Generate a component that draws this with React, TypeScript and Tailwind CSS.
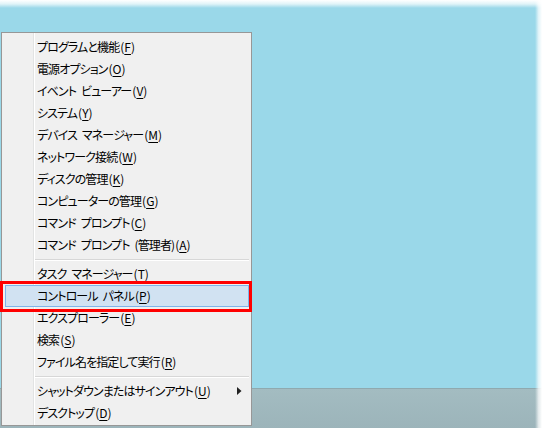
import React from "react";

type Item = { label: string; key: string; sub?: boolean; active?: boolean } | "sep";

const items: Item[] = [
  { label: "プログラムと機能", key: "F" },
  { label: "電源オプション", key: "O" },
  { label: "イベント ビューアー", key: "V" },
  { label: "システム", key: "Y" },
  { label: "デバイス マネージャー", key: "M" },
  { label: "ネットワーク接続", key: "W" },
  { label: "ディスクの管理", key: "K" },
  { label: "コンピューターの管理", key: "G" },
  { label: "コマンド プロンプト", key: "C" },
  { label: "コマンド プロンプト (管理者)", key: "A" },
  "sep",
  { label: "タスク マネージャー", key: "T" },
  { label: "コントロール パネル", key: "P", active: true },
  { label: "エクスプローラー", key: "E" },
  { label: "検索", key: "S" },
  { label: "ファイル名を指定して実行", key: "R" },
  "sep",
  { label: "シャットダウンまたはサインアウト", key: "U", sub: true },
  { label: "デスクトップ", key: "D" },
];

function Label({ text }: { text: string }) {
  const parts = text.split(" ");
  return (
    <span className="tracking-[-0.9px]">
      {parts.map((p, i) => (
        <React.Fragment key={i}>
          {i > 0 && <span className="inline-block w-[5px]"> </span>}
          {p}
        </React.Fragment>
      ))}
    </span>
  );
}

export default function App() {
  return (
    <div
      className="relative w-[542px] h-[428px] overflow-hidden bg-[#9ad8e9] flex flex-col"
      style={{ fontFamily: '"Noto Sans CJK JP", "Noto Sans", sans-serif' }}
    >
      <div className="flex-1" />
      <div className="h-[40px] border-t border-[#8fa9af] bg-gradient-to-b from-[#a3bcc1] to-[#9cb4ba]" />

      {/* soft edges */}
      <div className="absolute left-0 right-0 top-0 h-[8px] bg-gradient-to-b from-white via-white/70 to-transparent" />
      <div className="absolute top-0 bottom-0 right-0 w-[7px] bg-gradient-to-l from-white via-white/70 to-transparent" />

      {/* context menu */}
      <div className="absolute left-[1px] top-[32px] w-[251px] h-[394px] border border-[#979797] bg-[#f0f0f0] pt-[3px] pb-[1px] pl-[2px] pr-[1px]">
        <div className="relative flex flex-col">
          <div className="absolute left-[29px] top-[-3px] bottom-[-1px] w-[2px] border-l border-[#e2e3e3] bg-white" />
          {items.map((it, i) =>
            it === "sep" ? (
              <div key={i} className="h-[7px] flex items-center pl-[31px] pr-[1px]">
                <div className="h-[2px] w-full border-t border-[#d7d7d7] bg-white" />
              </div>
            ) : (
              <div
                key={i}
                className={`relative h-[22px] flex items-center text-[12px] text-black ${
                  it.active ? "mx-[1px] border border-[#7eb4ea] bg-[#d1e2f2] pl-[31px]" : "pl-[33px]"
                }`}
                style={{ fontFeatureSettings: '"palt"' }}
              >
                <span className="leading-none whitespace-pre">
                  <Label text={it.label} />
                  <span className="ml-[1px]">(<u className="underline-offset-2">{it.key}</u>)</span>
                </span>
                {it.sub && (
                  <svg className="absolute right-[8px] top-[7px]" width="5" height="8" viewBox="0 0 5 8">
                    <path d="M0 0 L4.5 4 L0 8 Z" fill="#222" />
                  </svg>
                )}
              </div>
            )
          )}
        </div>
      </div>

      {/* red annotation */}
      <div className="absolute left-0 top-[281px] w-[252px] h-[31px] border-[3px] border-[#ff0000]" />
    </div>
  );
}
